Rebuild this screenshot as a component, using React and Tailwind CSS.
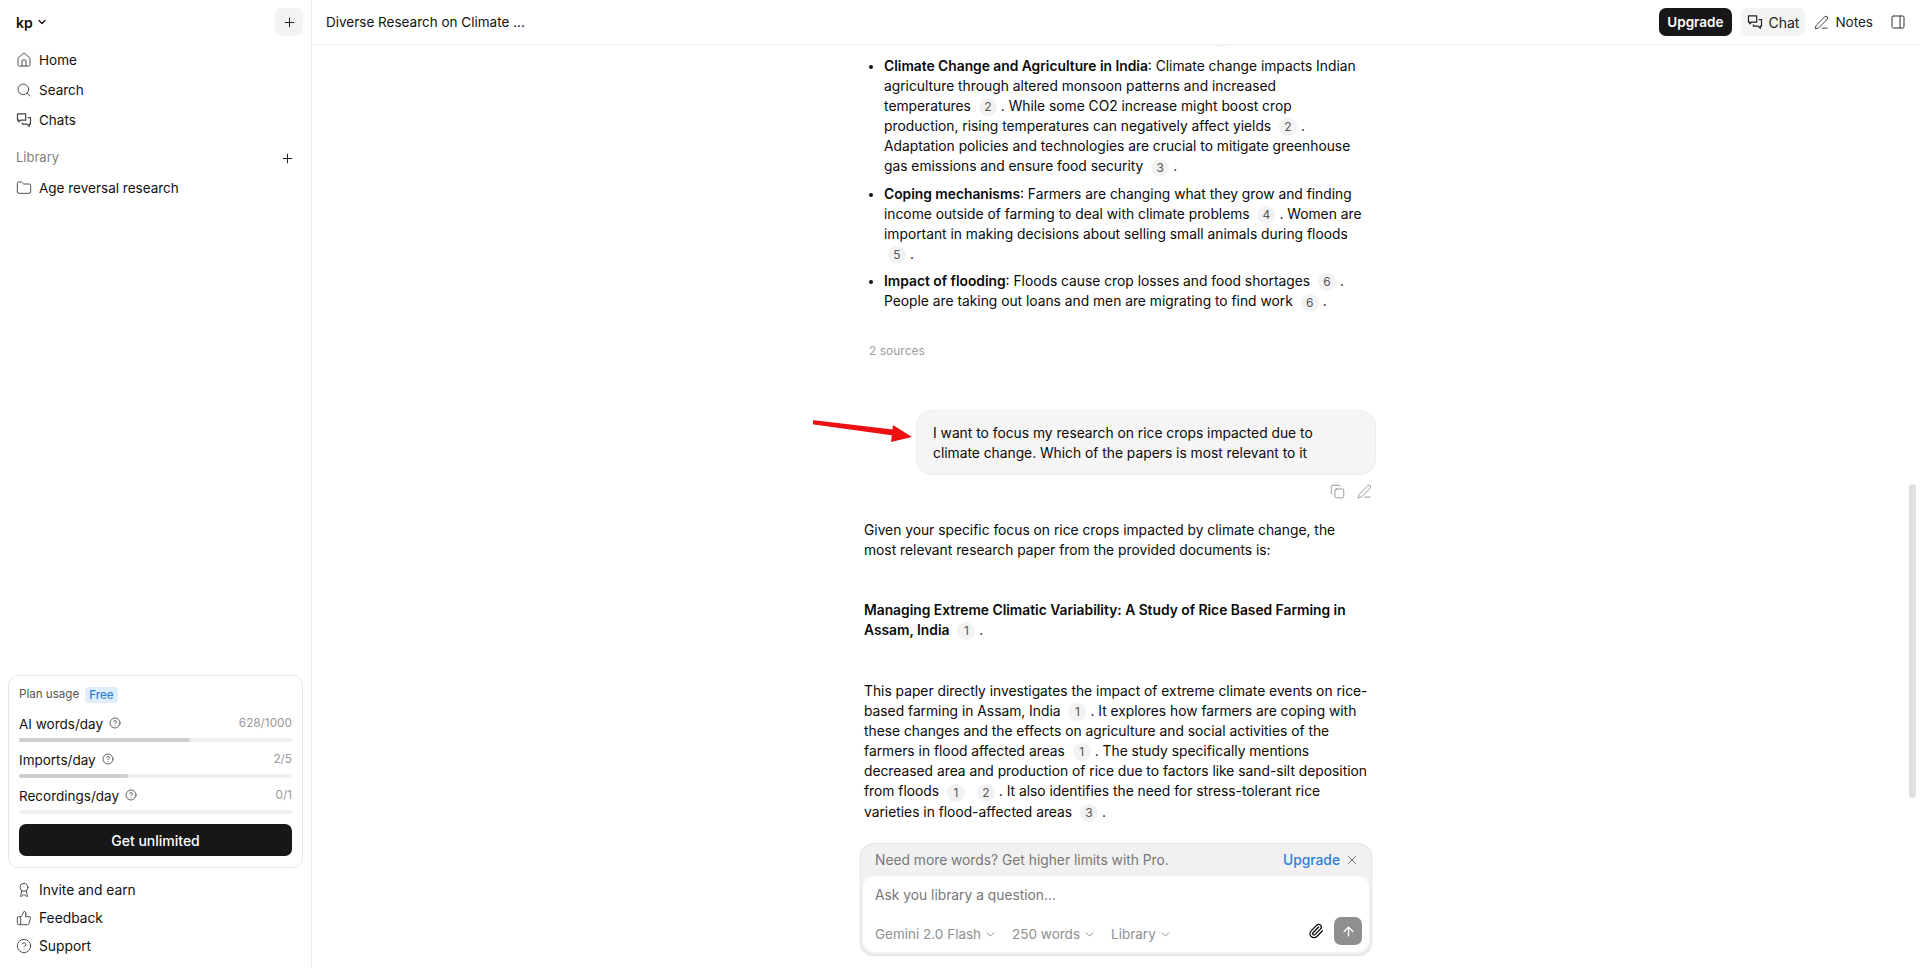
import {
  ChevronDown,
  CircleHelp,
  Copy,
  Folder,
  House,
  Paperclip,
  PanelRight,
  PenLine,
  Plus,
  Search,
  ThumbsUp,
  Award,
  ArrowUp,
  X,
} from 'lucide-react';

function ChatIcon({ className }) {
  return (
    <svg viewBox="0 0 16 16" fill="none" stroke="currentColor" strokeWidth="1.2" strokeLinejoin="round" className={className}>
      <path d="M1.5 1.8h8.2v6.4H4.6L2.8 9.8V8.2H1.5z" />
      <path d="M11.8 5.6h2.7v6.6h-1.2v2.2l-2.2-2.2H6.4V10.4" />
    </svg>
  );
}

function NavItem({ icon: Icon, label }) {
  return (
    <div className="flex h-[30px] items-center gap-[7px] pl-[16px] text-[13.5px] text-[#111]">
      <Icon className="h-[16px] w-[16px] text-[#444]" strokeWidth={1.4} />
      <span>{label}</span>
    </div>
  );
}

function UsageRow({ label, value, percent }) {
  return (
    <div>
      <div className="flex h-[20px] items-center justify-between">
        <div className="flex items-center gap-[6px] text-[13.5px] text-[#111]">
          {label}
          <CircleHelp className="mb-[2px] h-[12px] w-[12px] text-[#333]" strokeWidth={1.5} />
        </div>
        <span className="text-[11.8px] text-[#999]">{value}</span>
      </div>
      <div className="mt-[4px] h-[4px] rounded-full bg-[#f0f0f0]">
        <div className="h-full rounded-full bg-[#cfcfcf]" style={{ width: `${percent}%` }} />
      </div>
    </div>
  );
}

function Sidebar() {
  return (
    <aside className="flex h-full w-[312px] shrink-0 flex-col border-r border-[#ececec]">
      <div className="flex items-center justify-between pl-[16px] pr-[8px] pt-[8px]">
        <div className="flex items-center gap-[3px] text-[14px] font-semibold text-[#111]">
          kp
          <ChevronDown className="h-[12px] w-[12px]" strokeWidth={2.5} />
        </div>
        <div className="flex h-[28px] w-[28px] items-center justify-center rounded-[7px] bg-[#f3f3f3]">
          <Plus className="h-[15px] w-[15px] text-[#222]" strokeWidth={1.6} />
        </div>
      </div>
      <div className="mt-[9px]">
        <NavItem icon={House} label="Home" />
        <NavItem icon={Search} label="Search" />
        <NavItem icon={ChatIcon} label="Chats" />
      </div>
      <div className="mt-[8px] flex h-[30px] items-center justify-between pl-[16px] pr-[16px] text-[13px] text-[#808080]">
        Library
        <Plus className="h-[15px] w-[15px] text-[#222]" strokeWidth={1.6} />
      </div>
      <NavItem icon={Folder} label="Age reversal research" />

      <div className="mt-auto px-[8px]">
        <div className="rounded-[10px] border border-[#e8e8e8] px-[10px] pb-[11px] pt-[10px]">
          <div className="flex h-[18px] items-center gap-[6px] text-[11.6px] text-[#555]">
            Plan usage
            <span className="rounded-[4px] bg-[#dfeefc] px-[4px] text-[11.6px] font-medium leading-[16px] text-[#2f80dc]">Free</span>
          </div>
          <div className="mb-[10px] mt-[10px] flex flex-col gap-[8px]">
            <UsageRow label="AI words/day" value="628/1000" percent={62.8} />
            <UsageRow label="Imports/day" value="2/5" percent={40} />
            <UsageRow label="Recordings/day" value="0/1" percent={0} />
          </div>
          <div className="flex h-[32px] items-center justify-center rounded-[7px] bg-[#171717] text-[14px] font-medium text-white">
            Get unlimited
          </div>
        </div>
        <div className="mb-[8px] mt-[8px]">
          <FooterItem icon={Award} label="Invite and earn" />
          <FooterItem icon={ThumbsUp} label="Feedback" />
          <FooterItem icon={CircleHelp} label="Support" />
        </div>
      </div>
    </aside>
  );
}

function FooterItem({ icon: Icon, label }) {
  return (
    <div className="flex h-[28px] items-center gap-[7px] pl-[8px] text-[13.8px] text-[#111]">
      <Icon className="h-[16px] w-[16px] text-[#444]" strokeWidth={1.4} />
      <span>{label}</span>
    </div>
  );
}

function Header() {
  return (
    <header className="relative z-10 flex h-[45px] shrink-0 items-center justify-between border-b border-[#efefef] bg-white pl-[14px] pr-[14px]">
      <span className="text-[13.5px] text-[#111]">Diverse Research on Climate ...</span>
      <div className="flex items-center">
        <div className="flex h-[28px] items-center rounded-[7px] bg-[#171717] px-[8px] text-[13.5px] font-semibold text-white">Upgrade</div>
        <div className="ml-[9px] flex h-[28px] items-center gap-[6px] rounded-[7px] bg-[#f3f3f3] px-[6px] text-[14px] text-[#222]">
          <ChatIcon className="h-[16px] w-[16px]" />
          Chat
        </div>
        <div className="ml-[5px] flex h-[28px] items-center gap-[6px] px-[4px] text-[13.5px] text-[#222]">
          <PenLine className="h-[15px] w-[15px]" strokeWidth={1.4} />
          Notes
        </div>
        <PanelRight className="ml-[13px] h-[16px] w-[16px] text-[#333]" strokeWidth={1.5} />
      </div>
    </header>
  );
}

function Cite({ n }) {
  return (
    <span className="mx-[4px] inline-flex h-[18px] min-w-[18px] items-center justify-center rounded-full bg-[#f2f2f2] align-middle text-[12px] leading-none text-[#555]">
      {n}
    </span>
  );
}

function Conversation() {
  return (
    <div className="mx-auto w-[512px] translate-x-[4px] text-[13.8px] leading-[20px] text-[#0a0a0a]">
      <ul className="-mt-[18px] list-disc pl-[20px] pr-[12px] marker:text-[#111]">
        <li className="h-[20px] overflow-hidden">Rain has changed along with the hot temperature <Cite n="1" /></li>
        <li className="mt-[9px]">
          <strong className="font-semibold">Climate Change and Agriculture in India</strong>: Climate change impacts Indian agriculture through altered monsoon patterns and increased temperatures <Cite n="2" />. While some CO2 increase might boost crop production, rising temperatures can negatively affect yields <Cite n="2" />. Adaptation policies and technologies are crucial to mitigate greenhouse gas emissions and ensure food security <Cite n="3" />.
        </li>
        <li className="mt-[7px]">
          <strong className="font-semibold">Coping mechanisms</strong>: Farmers are changing what they grow and finding income outside of farming to deal with climate problems <Cite n="4" />. Women are important in making decisions about selling small animals during floods <Cite n="5" />.
        </li>
        <li className="mt-[7px]">
          <strong className="font-semibold">Impact of flooding</strong>: Floods cause crop losses and food shortages <Cite n="6" />. People are taking out loans and men are migrating to find work <Cite n="6" />.
        </li>
      </ul>
      <div className="mt-[30px] pl-[5px] text-[12px] leading-[18px] text-[#a0a0a0]">2 sources</div>

      <div className="relative ml-[52px] mt-[50px] w-[460px] rounded-[16px] border border-[#ececec] bg-[#f5f5f5] px-[16px] pb-[11px] pt-[12px]">
        I want to focus my research on rice crops impacted due to climate change. Which of the papers is most relevant to it
        <svg viewBox="0 0 106 24" className="absolute -left-[106px] top-[8px] h-[24px] w-[106px]">
          <path d="M3 2.4 L3 4.4 L86 16 L86 12 Z" fill="#ee1111" stroke="#ee1111" strokeWidth="2.2" strokeLinejoin="round" />
          <path d="M82 6 L101 18 L80 23 Z" fill="#ee1111" />
        </svg>
      </div>
      <div className="mt-[9px] flex justify-end gap-[12px] pr-[4px] text-[#777]">
        <Copy className="h-[15px] w-[15px]" strokeWidth={1.2} />
        <PenLine className="h-[15px] w-[15px]" strokeWidth={1.2} />
      </div>

      <div className="pr-[7px]">
        <p className="mt-[21px]">Given your specific focus on rice crops impacted by climate change, the most relevant research paper from the provided documents is:</p>
        <p className="mt-[40px]">
          <strong className="font-semibold">Managing Extreme Climatic Variability: A Study of Rice Based Farming in Assam, India</strong> <Cite n="1" />.
        </p>
        <p className="mt-[41px]">
          This paper directly investigates the impact of extreme climate events on rice-based farming in Assam, India <Cite n="1" />. It explores how farmers are coping with these changes and the effects on agriculture and social activities of the farmers in flood affected areas <Cite n="1" />. The study specifically mentions decreased area and production of rice due to factors like sand-silt deposition from floods <Cite n="1" /> <Cite n="2" />. It also identifies the need for stress-tolerant rice varieties in flood-affected areas <Cite n="3" />.
        </p>
      </div>
    </div>
  );
}

function Picker({ label }) {
  return (
    <span className="flex items-center gap-[3px]">
      {label}
      <ChevronDown className="h-[13px] w-[13px] text-[#777]" strokeWidth={1.5} />
    </span>
  );
}

function Composer() {
  return (
    <div className="mx-auto mb-[13px] w-[512px] rounded-[14px] border border-[#e6e6e6] bg-[#f1f1f1] p-[2px] pt-0 shadow-[0_1px_2px_rgba(0,0,0,0.12)]">
      <div className="flex h-[32px] items-center justify-between pl-[12px] pr-[10px] text-[13.8px] text-[#777]">
        Need more words? Get higher limits with Pro.
        <div className="flex items-center gap-[5px]">
          <span className="font-medium text-[#2f7fdc]">Upgrade</span>
          <X className="h-[14px] w-[14px] text-[#666]" strokeWidth={1.6} />
        </div>
      </div>
      <div className="rounded-[12px] bg-white pb-[7px] pl-[12px] pr-[7px] pt-[9px]">
        <div className="h-[20px] text-[13.8px] leading-[20px] text-[#777]">Ask you library a question...</div>
        <div className="mt-[12px] flex h-[28px] items-center justify-between text-[13.5px] text-[#909090]">
          <div className="flex items-center gap-[15px] pt-[6px]">
            <Picker label="Gemini 2.0 Flash" />
            <Picker label="250 words" />
            <Picker label="Library" />
          </div>
          <div className="flex items-center gap-[10px]">
            <Paperclip className="h-[16px] w-[16px] text-black" strokeWidth={1.8} />
            <div className="flex h-[28px] w-[28px] items-center justify-center rounded-[7px] bg-[#8f8f8f]">
              <ArrowUp className="h-[15px] w-[15px] text-white" strokeWidth={2.2} />
            </div>
          </div>
        </div>
      </div>
    </div>
  );
}

export default function App() {
  return (
    <div className="flex h-[968px] overflow-hidden bg-white font-['Inter',sans-serif]">
      <Sidebar />
      <main className="relative flex min-w-0 flex-1 flex-col">
        <Header />
        <div className="min-h-0 flex-1 overflow-hidden">
          <Conversation />
        </div>
        <Composer />
        <div className="absolute right-[4px] top-[484px] h-[314px] w-[7px] rounded-full bg-[#e0e0e0]" />
      </main>
    </div>
  );
}
